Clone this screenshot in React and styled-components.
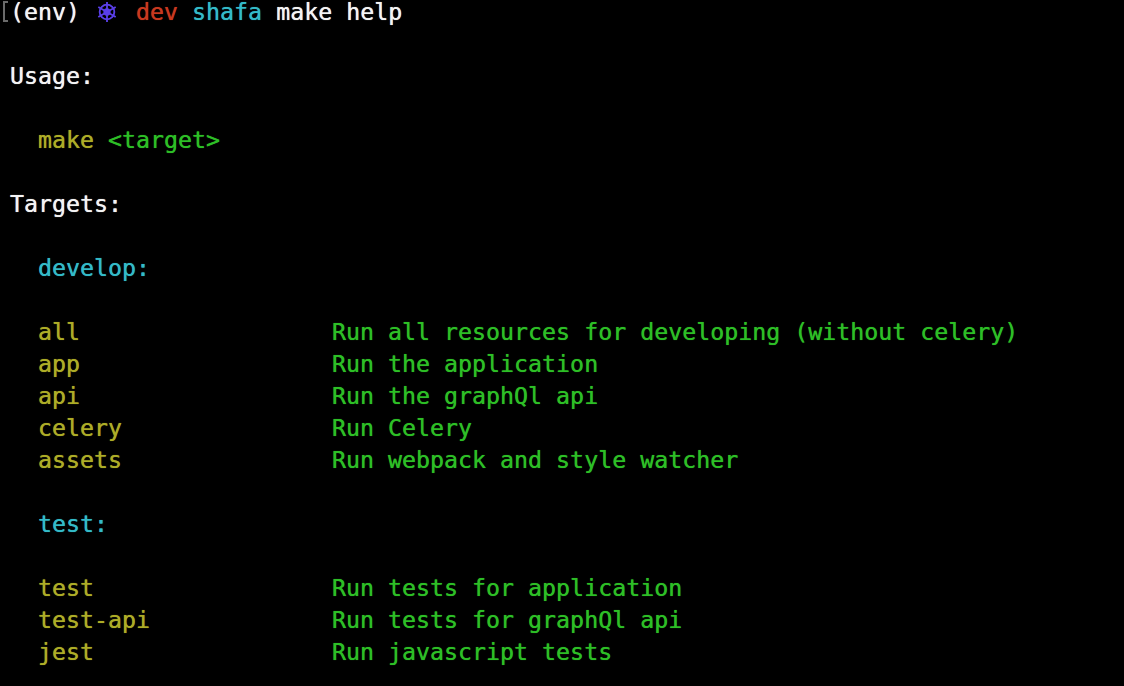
import React from "react";
import styled, { createGlobalStyle } from "styled-components";

const GlobalStyle = createGlobalStyle`
  html, body {
    margin: 0;
    height: 100%;
    background: #000;
    overflow: hidden;
  }
`;

const colors = {
  white: "#f4f4f4",
  red: "#c9391f",
  cyan: "#33bbc8",
  yellow: "#adad27",
  green: "#2dbf26",
  violet: "#5a3fe8",
};

const Terminal = styled.div`
  height: 686px;
  margin-top: -4px;
  padding-left: 10px;
  background: #000;
  color: ${colors.white};
  font-family: "DejaVu Sans Mono", "Liberation Mono", monospace;
  font-size: 23.28px;
  line-height: 32px;
  white-space: pre;
  text-shadow: 0 0 0.7px currentColor;
`;

const Line = styled.div`
  display: flex;
  height: 32px;
`;

const Blank = styled.div`
  height: 32px;
`;

const Span = styled.span`
  color: ${(p) => colors[p.$color] || colors.white};
`;

const Cursor = styled.span`
  position: absolute;
  left: 3px;
  top: 1px;
  width: 5px;
  height: 21px;
  border: 2px solid #6a6a6a;
  border-right: none;
  box-sizing: border-box;
`;

const Helm = styled.svg`
  width: 22px;
  height: 22px;
  margin: 5px 4px 0 2px;
  flex: none;
`;

const Indented = styled(Line)`
  padding-left: 28px;
`;

const Name = styled.span`
  width: 294px;
  flex: none;
  color: ${colors.yellow};
`;

const Desc = styled.span`
  color: ${colors.green};
`;

const HelmIcon = () => (
  <Helm viewBox="0 0 24 24" fill="none" stroke={colors.violet} strokeWidth="2">
    <circle cx="12" cy="12" r="8" />
    <path d="M12 1v22M2.5 6.5l19 11M21.5 6.5l-19 11" />
    <circle cx="12" cy="12" r="3" fill={colors.violet} />
  </Helm>
);

const Target = ({ name, desc }) => (
  <Indented>
    <Name>{name}</Name>
    <Desc>{desc}</Desc>
  </Indented>
);

const App = () => (
  <>
    <GlobalStyle />
    <Terminal>
      <Cursor />
      <Line>
        <Span>(env) </Span>
        <HelmIcon />
        <Span $color="red"> dev </Span>
        <Span $color="cyan">shafa </Span>
        <Span>make help</Span>
      </Line>
      <Blank />
      <Line>Usage:</Line>
      <Blank />
      <Indented>
        <Span $color="yellow">make </Span>
        <Span $color="green">&lt;target&gt;</Span>
      </Indented>
      <Blank />
      <Line>Targets:</Line>
      <Blank />
      <Indented>
        <Span $color="cyan">develop:</Span>
      </Indented>
      <Blank />
      <Target name="all" desc="Run all resources for developing (without celery)" />
      <Target name="app" desc="Run the application" />
      <Target name="api" desc="Run the graphQl api" />
      <Target name="celery" desc="Run Celery" />
      <Target name="assets" desc="Run webpack and style watcher" />
      <Blank />
      <Indented>
        <Span $color="cyan">test:</Span>
      </Indented>
      <Blank />
      <Target name="test" desc="Run tests for application" />
      <Target name="test-api" desc="Run tests for graphQl api" />
      <Target name="jest" desc="Run javascript tests" />
    </Terminal>
  </>
);

export default App;
